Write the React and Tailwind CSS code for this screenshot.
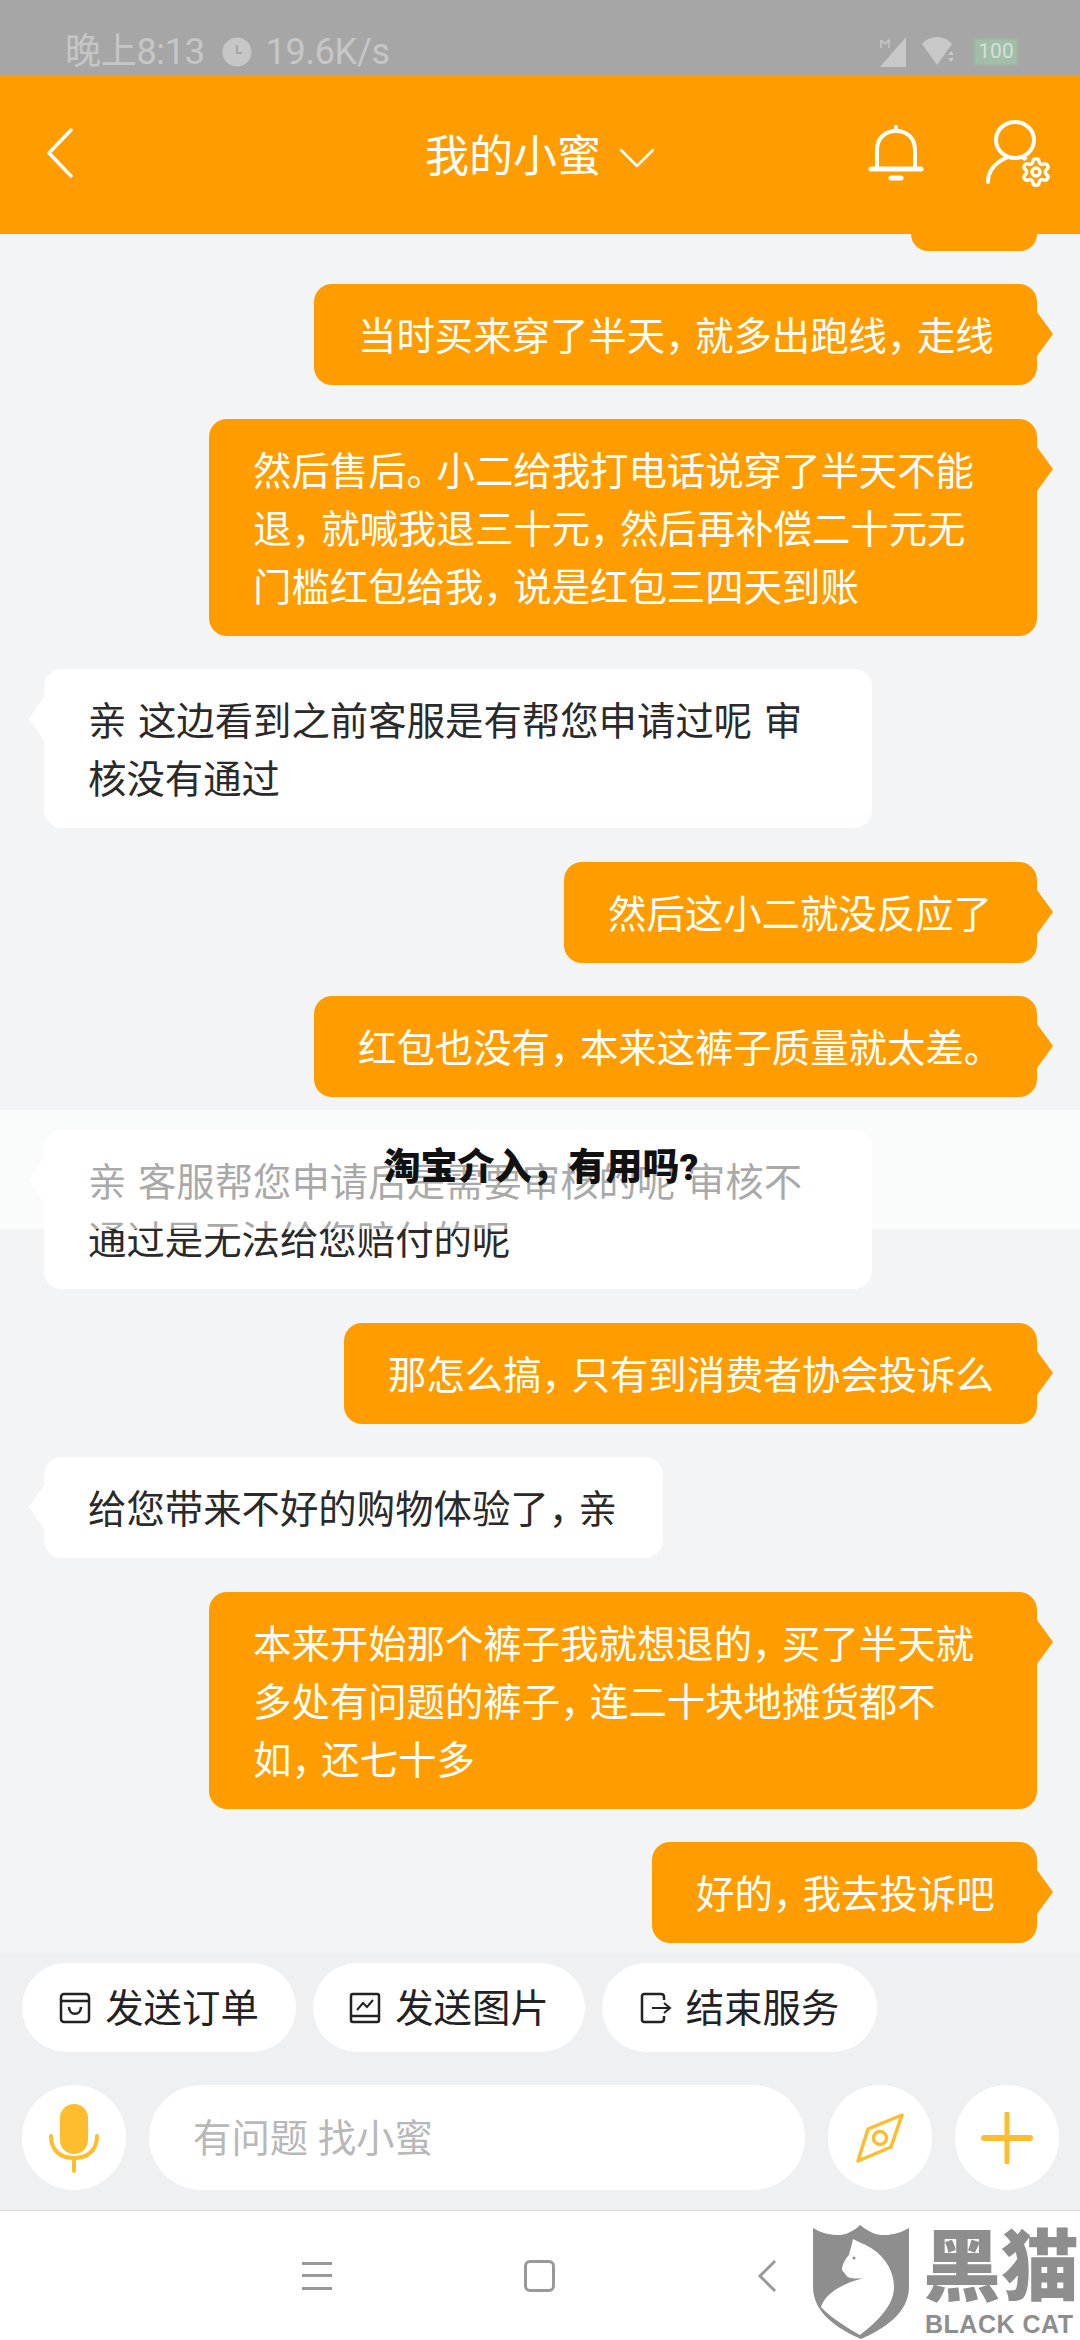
import React from 'react';
import { Settings } from 'lucide-react';

const FONT = "font-['Roboto','Noto_Sans_CJK_SC',sans-serif]";

const messages = [
  { me: true, w: 'w-[723px]', lines: ['当时买来穿了半天，就多出跑线，走线'] },
  { me: true, w: 'w-[828px]', lines: ['然后售后。小二给我打电话说穿了半天不能', '退，就喊我退三十元，然后再补偿二十元无', '门槛红包给我，说是红包三四天到账'] },
  { me: false, w: 'w-[828px]', lines: ['亲 这边看到之前客服是有帮您申请过呢 审', '核没有通过'] },
  { me: true, w: 'w-[473px]', lines: ['然后这小二就没反应了'] },
  { me: true, w: 'w-[723px]', lines: ['红包也没有，本来这裤子质量就太差。'] },
  { me: false, w: 'w-[828px]', lines: ['亲 客服帮您申请后是需要审核的呢 审核不', '通过是无法给您赔付的呢'] },
  { me: true, w: 'w-[693px]', lines: ['那怎么搞，只有到消费者协会投诉么'] },
  { me: false, w: 'w-[619px]', lines: ['给您带来不好的购物体验了，亲'] },
  { me: true, w: 'w-[828px]', lines: ['本来开始那个裤子我就想退的，买了半天就', '多处有问题的裤子，连二十块地摊货都不', '如，还七十多'] },
  { me: true, w: 'w-[385px]', lines: ['好的，我去投诉吧'] },
];

// the app's punctuation is narrower than a full CJK cell
const Line = ({ text }) => (
  <div>
    {text.split(/([，。])/).map((part, i) =>
      part === '，' || (part === '。' && i < text.length - 2) ? (
        <span key={i} className="tracking-[-8.5px]">{part}</span>
      ) : (
        <span key={i}>{part}</span>
      )
    )}
  </div>
);

const Bubble = ({ me, w, lines }) => (
  <div className={`relative ${w} shrink-0 rounded-[18px] px-[44px] pb-[19px] pt-[24px] text-[38.4px] leading-[58px] whitespace-nowrap [word-spacing:2px] ${me ? 'self-end bg-[#ff9d00] text-white' : 'self-start bg-white text-[#2a2a2a]'}`}>
    {lines.map((l) => <Line key={l} text={l} />)}
    {me ? (
      <svg className="absolute left-full top-[28px]" width="18" height="44" viewBox="0 0 18 44"><path d="M0 0L16 22L0 44Z" fill="#ff9d00" /></svg>
    ) : (
      <svg className="absolute right-full top-[28px]" width="16" height="44" viewBox="0 0 16 44"><path d="M16 0L1 22L16 44Z" fill="#ffffff" /></svg>
    )}
  </div>
);

const StatusBar = () => (
  <div className="flex h-[75px] shrink-0 items-center bg-[#a6a6a6] pl-[65px] pr-[62px] pt-[28px] text-[36px] text-[#c6c6c6]">
    <span className="tracking-[-0.3px]">晚上8:13</span>
    <svg className="ml-[17px]" width="30" height="30" viewBox="0 0 30 30">
      <circle cx="15" cy="15" r="14.5" fill="#c6c6c6" />
      <path d="M15 8V16H20" stroke="#a6a6a6" strokeWidth="2" fill="none" />
    </svg>
    <span className="ml-[14px] tracking-[-0.3px]">19.6K/s</span>
    <div className="ml-auto flex items-center">
      <svg width="30" height="30" viewBox="0 0 30 30">
        <path d="M28 0V30H2Z" fill="#c8c8c8" />
        <path d="M3 3V11M3 3L7 7L11 3V11" stroke="#c8c8c8" strokeWidth="1.5" fill="none" />
      </svg>
      <svg className="ml-[14px]" width="34" height="30" viewBox="0 0 34 30">
        <path d="M0 7C4 2 10 0 15 0C20 0 26 2 30 7L15 28Z" fill="#c8c8c8" />
        <path d="M26 18L29 14L32 18ZM26 21L29 25L32 21Z" fill="#c8c8c8" />
      </svg>
      <div className="ml-[18px] flex h-[28px] w-[44px] items-center justify-center rounded-[3px] border-2 border-[#9bb8a2] bg-[#a3bda8] text-[21px] leading-none text-[#d4e0d6]">100</div>
    </div>
  </div>
);

const Header = () => (
  <div className="relative flex h-[159px] shrink-0 items-center bg-[#ff9d00] pb-[4px] text-white">
    <svg className="ml-[44px]" width="32" height="52" viewBox="0 0 32 52" fill="none" stroke="white" strokeWidth="3.5" strokeLinecap="round" strokeLinejoin="round">
      <path d="M27 3L5 26L27 49" />
    </svg>
    <div className="absolute left-[425px] top-[52px] flex items-center">
      <span className="text-[44px] leading-[60px]">我的小蜜</span>
      <svg className="ml-[18px] mt-[2px]" width="36" height="20" viewBox="0 0 36 20" fill="none" stroke="white" strokeWidth="2.5" strokeLinecap="round" strokeLinejoin="round">
        <path d="M2 2L18 18L34 2" />
      </svg>
    </div>
    <div className="ml-auto mr-[28px] flex items-center">
      <svg width="56" height="58" viewBox="0 0 56 58" fill="none" stroke="white" strokeWidth="4" strokeLinecap="round">
        <path d="M28 3V7" />
        <path d="M9 45V26C9 14 17 7 28 7C39 7 47 14 47 26V45" />
        <path d="M3 45H53" strokeWidth="5" />
        <path d="M23 54H33" strokeWidth="5" />
      </svg>
      <div className="relative ml-[62px] h-[66px] w-[66px]">
        <svg width="66" height="66" viewBox="0 0 66 66" fill="none" stroke="white" strokeWidth="4" strokeLinecap="round">
          <ellipse cx="29" cy="20" rx="19" ry="18" />
          <path d="M2 62C2 50 10 42 22 37" />
          <path d="M36 37L41 40" />
        </svg>
        <Settings className="absolute left-[34px] top-[36px] h-[32px] w-[32px] rounded-full bg-[#ff9d00] text-white" strokeWidth={2.6} />
      </div>
    </div>
  </div>
);

const OrderIcon = () => (
  <svg width="32" height="32" viewBox="0 0 32 32" fill="none" stroke="#222" strokeWidth="2.5">
    <rect x="2" y="2" width="28" height="28" rx="3" />
    <path d="M2 9H30" />
    <path d="M10 15C10 24 22 24 22 15" />
  </svg>
);

const PictureIcon = () => (
  <svg width="32" height="32" viewBox="0 0 32 32" fill="none" stroke="#222" strokeWidth="2.5">
    <rect x="2" y="2" width="28" height="28" rx="2" />
    <path d="M2 24H30" />
    <path d="M8 18L14 11L18 15L24 8" strokeWidth="2" />
  </svg>
);

const ExitIcon = () => (
  <svg width="32" height="32" viewBox="0 0 32 32" fill="none" stroke="#222" strokeWidth="2.5">
    <path d="M24 8V5C24 3 23 2 21 2H4C3 2 2 3 2 4V28C2 29 3 30 4 30H21C23 30 24 29 24 27V24" />
    <path d="M12 16H29M24 11L30 16L24 21" strokeWidth="2" />
  </svg>
);

const Chip = ({ icon, label, w }) => (
  <div className={`flex h-[89px] ${w} items-center justify-center gap-[14px] rounded-full bg-white text-[38.4px] text-[#222]`}>
    {icon}
    <span className="pt-[2px]">{label}</span>
  </div>
);

const Composer = () => (
  <div className="flex h-[257px] shrink-0 flex-col bg-[#eff0f2] pl-[22px] pt-[10px]">
    <div className="flex gap-[17px]">
      <Chip icon={<OrderIcon />} label="发送订单" w="w-[274px]" />
      <Chip icon={<PictureIcon />} label="发送图片" w="w-[272px]" />
      <Chip icon={<ExitIcon />} label="结束服务" w="w-[275px]" />
    </div>
    <div className="mt-[33px] flex gap-[23px]">
      <div className="flex h-[105px] w-[104px] items-center justify-center rounded-full bg-white">
        <svg width="50" height="70" viewBox="0 0 50 70" fill="none" stroke="#fdbd2f" strokeWidth="4" strokeLinecap="round">
          <rect x="11" y="1" width="28" height="50" rx="14" fill="#fdbd2f" stroke="none" />
          <path d="M2 33C2 48 12 55 25 55C38 55 48 48 48 33" />
          <path d="M25 55V68" />
        </svg>
      </div>
      <div className="flex h-[105px] w-[656px] items-center rounded-full bg-white pl-[44px] pt-[2px] text-[38.4px] text-[#b8b8b8]">有问题 找小蜜</div>
      <div className="flex h-[105px] w-[104px] items-center justify-center rounded-full bg-white">
        <svg width="48" height="50" viewBox="0 0 48 50" fill="none" stroke="#fdbd2f" strokeWidth="3.5" strokeLinejoin="round">
          <path d="M46 2L35 34L2 48L12 16Z" />
          <circle cx="24" cy="25" r="6.5" />
        </svg>
      </div>
      <div className="flex h-[105px] w-[104px] items-center justify-center rounded-full bg-white">
        <svg width="52" height="52" viewBox="0 0 52 52" fill="none" stroke="#fdbd2f" strokeLinecap="round">
          <path d="M3 26H49" strokeWidth="6" />
          <path d="M26 2V50" strokeWidth="5" />
        </svg>
      </div>
    </div>
  </div>
);

const NavBar = () => (
  <div className="relative flex h-[130px] shrink-0 items-center border-t border-[#dcdcdc] bg-white">
    <div className="ml-[302px] flex h-[28px] w-[30px] flex-col justify-between">
      <div className="h-[3px] bg-[#999]" />
      <div className="h-[3px] bg-[#999]" />
      <div className="h-[3px] bg-[#999]" />
    </div>
    <div className="ml-[192px] h-[32px] w-[31px] rounded-[6px] border-[3px] border-[#999]" />
    <svg className="ml-[202px]" width="20" height="34" viewBox="0 0 20 34" fill="none" stroke="#999" strokeWidth="3">
      <path d="M18 2L3 17L18 32" />
    </svg>
    {/* watermark */}
    <div className="absolute left-[812px] top-[14px] flex">
      <svg width="98" height="115" viewBox="0 0 98 115">
        <path d="M1 3C12 10 28 12 36 8C41 6 45 3 48 0C52 3 56 6 61 8C70 12 86 10 97 3V62C97 88 72 104 49 114C26 104 1 88 1 62Z" fill="#8e8e8e" />
        <path d="M41 14L49 18C70 26 82 44 82 62C82 80 66 96 48 110C34 102 18 92 9 82C12 72 24 60 52 53C44 54 36 54 34 50L30 45C30 40 33 34 37 30C38 25 40 20 41 14Z" fill="#ffffff" />
        <circle cx="42" cy="33" r="1.5" fill="#8e8e8e" />
      </svg>
      <div className="ml-[13px] flex flex-col">
        <div className="mt-[6px] flex h-[76px] w-[156px] items-center whitespace-nowrap text-[78px] font-black leading-none text-[#8e8e8e]">黑猫</div>
        <div className="mt-[5px] whitespace-nowrap pl-[2px] font-['Liberation_Sans',sans-serif] text-[25px] font-bold leading-[24px] tracking-[0.5px] text-[#8e8e8e]">BLACK CAT</div>
      </div>
    </div>
  </div>
);

export default function App() {
  return (
    <div className={`relative flex h-[2340px] w-[1080px] flex-col overflow-hidden bg-[#f3f4f6] ${FONT}`}>
      <StatusBar />
      <Header />
      <div className="flex flex-1 flex-col gap-[33.4px] overflow-hidden pl-[44px] pr-[43px]">
        <div className="h-[17px] w-[126px] shrink-0 self-end rounded-b-[18px] bg-[#ff9d00]" />
        {messages.map((m, i) => <Bubble key={i} {...m} />)}
      </div>
      <Composer />
      <NavBar />
      {/* title banner lying over the chat */}
      <div className="absolute left-0 top-[1110px] flex h-[119px] w-full items-center justify-center bg-white/60 pb-[4px] pl-[2px] text-[37px] font-black text-[#111]">
        淘宝介入，有用吗?
      </div>
    </div>
  );
}
